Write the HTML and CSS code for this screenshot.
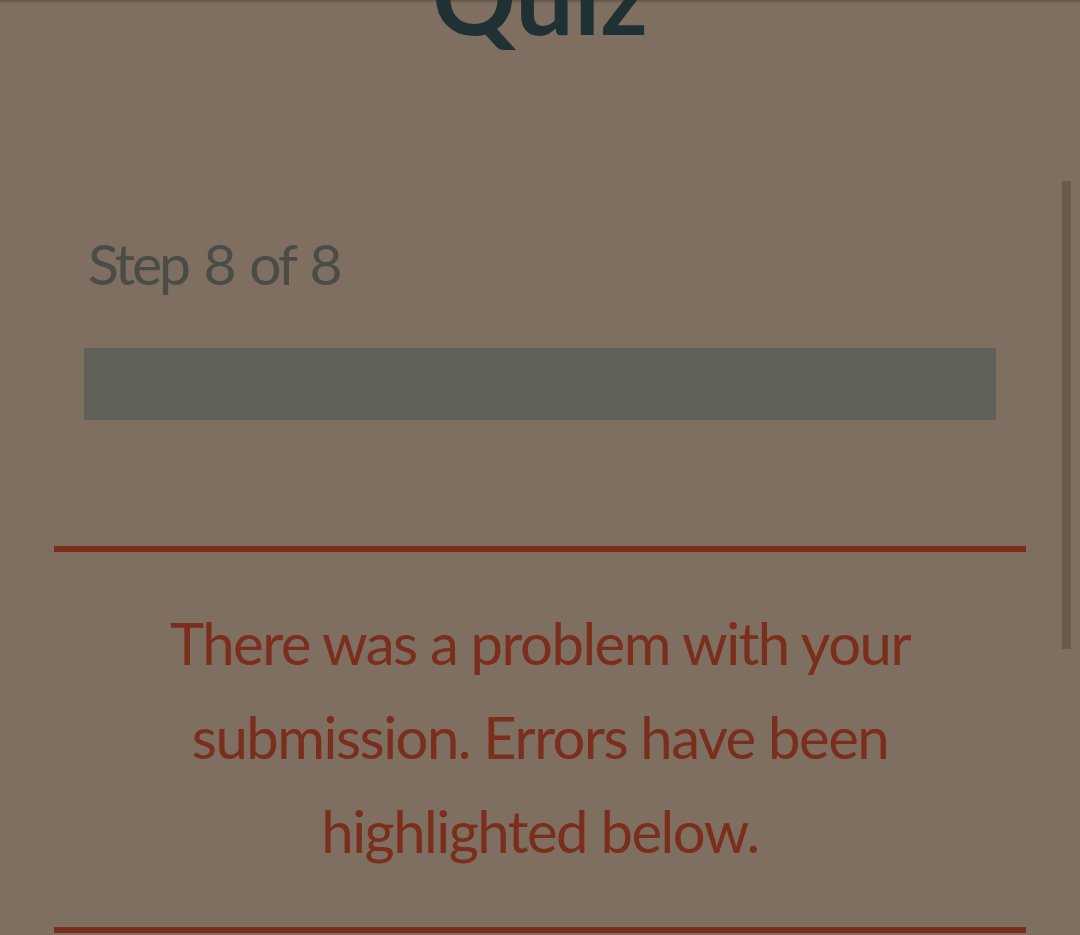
FILE: index.html
```html
<!DOCTYPE html>
<html>
<head>
<meta charset="utf-8">
<link rel="stylesheet" href="styles.css">
</head>
<body>
<div class="page">
  <header class="head">
    <h1 class="title">Quiz</h1>
  </header>
  <main class="content">
    <div class="progress">
      <div class="step">Step 8 of 8</div>
      <div class="bar"></div>
    </div>
    <div class="error">
      <p class="error-text">There was a problem with your submission. Errors have been highlighted below.</p>
    </div>
  </main>
  <div class="scrollbar"></div>
</div>
</body>
</html>
```
FILE: styles.css
```css
html, body {
  margin: 0;
  padding: 0;
  background: #7e6f61;
}
body {
  font-family: Lato, "Open Sans", sans-serif;
  overflow: hidden;
  height: 935px;
  box-shadow: inset 0 3px 2px -1px rgba(60, 45, 35, 0.35);
}
.page {
  position: relative;
  height: 935px;
}
.head {
  height: 60px;
  overflow: hidden;
  display: flex;
  justify-content: center;
}
.title {
  margin: -55px 0 0 0;
  font-size: 104px;
  line-height: 100px;
  font-weight: 700;
  color: #1f3133;
}
.content {
  padding: 0 54px;
}
.progress {
  padding: 173px 30px 0;
}
.step {
  font-size: 57px;
  line-height: 60px;
  letter-spacing: -3px;
  word-spacing: 4px;
  color: #4b4c45;
  padding-left: 4px;
}
.bar {
  margin-top: 55px;
  height: 72px;
  background: #60625a;
}
.error {
  margin-top: 126px;
  border-top: 6px solid #7a2e1b;
  border-bottom: 6px solid #7a2e1b;
  padding: 44px 90px 49px;
}
.error-text {
  margin: 0;
  text-align: center;
  color: #7a2e1b;
  font-size: 58px;
  line-height: 94px;
  letter-spacing: -1.5px;
}
.scrollbar {
  position: absolute;
  left: 1062px;
  top: 181px;
  width: 9px;
  height: 468px;
  background: #6a5a4b;
}
```
